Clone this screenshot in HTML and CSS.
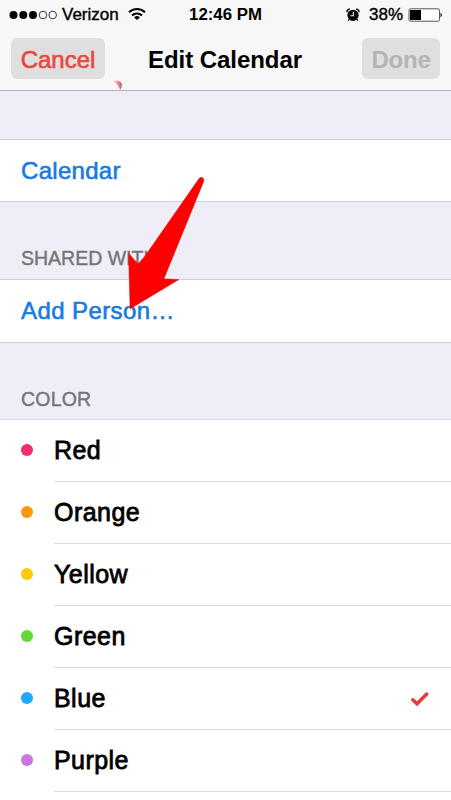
FILE: index.html
```html
<!DOCTYPE html>
<html lang="en">
<head>
<meta charset="utf-8">
<title>Edit Calendar</title>
<link rel="stylesheet" href="styles.css">
</head>
<body>
<div class="screen">
  <header class="top">
    <div class="status">
      <div class="carrier">
        <svg class="signal" width="50" height="12" viewBox="0 0 50 12"><g fill="#000"><circle cx="4.500" cy="6" r="4"/><circle cx="14.300" cy="6" r="4"/><circle cx="24" cy="6" r="4"/></g><g fill="none" stroke="#222" stroke-width=".9"><circle cx="34" cy="6" r="3.800"/><circle cx="43.700" cy="6" r="3.800"/></g></svg>
        <span class="verizon">Verizon</span>
        <svg class="wifi" width="18" height="14" viewBox="0 0 18 14"><g fill="none" stroke="#000" stroke-width="2"><path d="M1 5.2a11.3 11.3 0 0 1 16 0"/><path d="M4 8.5a7 7 0 0 1 10 0"/></g><path d="M9 13L6.1 10.4a4.2 4.2 0 0 1 5.8 0z"/></svg>
      </div>
      <span class="time">12:46 PM</span>
      <div class="power">
        <svg class="alarm" width="14" height="14" viewBox="0 0 14 14"><circle cx="7" cy="7.3" r="5.6"/><path d="M.9 4.2Q1 1.5 3.8 1M13.1 4.2Q13 1.5 10.2 1M3 11.5L2.200 12.600M11 11.5L11.800 12.600" fill="none" stroke="#000" stroke-width="1.300"/><path d="M7.3 3.8V7.8H4.5" fill="none" stroke="#f7f7f7" stroke-width="1.1"/></svg>
        <span class="percent">38%</span>
        <svg class="battery" width="36" height="14" viewBox="0 0 36 14"><rect x="1" y=".8" width="30.5" height="12.4" rx="1.5" fill="#fff" stroke="#555" stroke-width="1"/><path d="M2 2H13V12H2z"/><path d="M32.5 4.5Q35.5 7 32.5 9.5z" fill="#222"/></svg>
      </div>
    </div>
    <nav class="nav">
      <button class="btn cancel">Cancel</button>
      <h1>Edit Calendar</h1>
      <button class="btn done">Done</button>
    </nav>
  </header>
  <svg class="speck" width="10" height="12" viewBox="0 0 10 12"><defs><linearGradient id="pink"><stop offset="0" stop-color="#fbdde2"/><stop offset="1" stop-color="#d9506b"/></linearGradient></defs><path d="M0 1Q7-1 9 4Q9 8 7 10Q6 5 0 1z" fill="url(#pink)"/></svg>
  <section class="cell calendar">Calendar</section>
  <h2 class="shared">SHARED WITH</h2>
  <section class="cell person">Add Person…</section>
  <h2 class="color">COLOR</h2>
  <ul class="colors">
    <li><i class="dot red"></i><span>Red</span></li>
    <li><i class="dot orange"></i><span>Orange</span></li>
    <li><i class="dot yellow"></i><span>Yellow</span></li>
    <li><i class="dot green"></i><span>Green</span></li>
    <li><i class="dot blue"></i><span>Blue</span><svg class="check" width="20" height="16" viewBox="0 0 20 16"><path d="M2.8 8.8L7 12.8L16.7 3" fill="none" stroke="#e23b3b" stroke-width="3.5" stroke-linecap="round"/></svg></li>
    <li><i class="dot purple"></i><span>Purple</span></li>
  </ul>
  <svg class="arrow" width="90" height="145" viewBox="120 170 90 145"><path d="M199 178.500Q201 176.500 203 178Q204.500 179.500 203.500 182L164 278.800L179 279.500L130 309L128.500 253L138 264L145 256Z" fill="#f00" stroke="#c91818" stroke-width=".4"/></svg>
</div>
</body>
</html>
```
FILE: styles.css
```css
* { box-sizing: border-box; }
body { margin: 0; background: #fff; font-family: "Liberation Sans", Arial, sans-serif; color: #000; }
.screen { position: relative; width: 451px; height: 800px; display: flex; flex-direction: column; overflow: hidden; background: #efedf5; }
.screen > * { flex-shrink: 0; }
.top { height: 91px; background: #f7f7f7; border-bottom: 1px solid #b5b4b8; }
.status { height: 30px; display: grid; grid-template-columns: 1fr auto 1fr; align-items: center; font-size: 17px; line-height: 30px; }
.carrier, .power { display: flex; align-items: center; }
.carrier { padding-left: 9px; }
.verizon { margin-left: 3px; -webkit-text-stroke: .4px #000; }
.wifi { margin-left: 9px; margin-top: -2px; }
.time { font-size: 16.800px; font-weight: bold; }
.power { justify-content: flex-end; padding-right: 7px; }
.percent { margin: 0 5px 0 9px; -webkit-text-stroke: .4px #000; }
.nav { height: 60px; padding: 8px 11px 0; display: grid; grid-template-columns: 94px 1fr 78px; align-items: start; }
.btn { height: 41px; padding: 2px 0 0; border: 0; border-radius: 6px; background: #dfdfdf; font: 24px/39px "Liberation Sans", Arial, sans-serif; }
.cancel { color: #ed4640; -webkit-text-stroke: .6px #ed4640; }
.done { color: #b4b4b4; font-weight: bold; letter-spacing: -.2px; }
h1 { margin: 0; padding-left: 43px; font-size: 24px; line-height: 43px; letter-spacing: -.05px; }
.cell { height: 63px; padding-left: 21px; background: #fff; border: solid #d0cfd4; border-width: 1px 0; color: #187be0; -webkit-text-stroke: .6px #187be0; font-size: 24px; line-height: 62px; }
.calendar { margin-top: 48px; letter-spacing: .3px; }
.person { height: 64px; line-height: 61px; letter-spacing: .4px; }
h2 { margin: 0; padding-left: 21px; color: #75747b; -webkit-text-stroke: .4px #75747b; font-size: 19.500px; font-weight: normal; }
.shared { height: 77px; padding-top: 35px; line-height: 42px; }
.color { height: 76px; padding-top: 35px; line-height: 42px; letter-spacing: .2px; }
.colors { flex: 1 0 auto; margin: 0; padding: 0; list-style: none; background: #fff; border-top: 1px solid #dcdbe0; }
li { height: 62px; display: flex; align-items: center; padding-left: 21px; background: linear-gradient(#d9d9dc, #d9d9dc) 54px 100% / 100% 1px no-repeat; font-size: 25px; }
li span { flex: 1; margin-left: 21px; letter-spacing: .45px; -webkit-text-stroke: .8px #000; line-height: 58px; padding-bottom: 2px; }
.dot { width: 12px; height: 12px; margin-top: -3px; border-radius: 50%; }
.red { background: #f42c72; }
.orange { background: #fa970d; }
.yellow { background: #fccb0b; }
.green { background: #62d936; }
.blue { background: #1fa9f4; }
.purple { background: #cb76de; }
.check { margin-right: 21px; }
.speck { position: absolute; left: 113px; top: 80px; }
.arrow { position: absolute; left: 120px; top: 170px; }
```
